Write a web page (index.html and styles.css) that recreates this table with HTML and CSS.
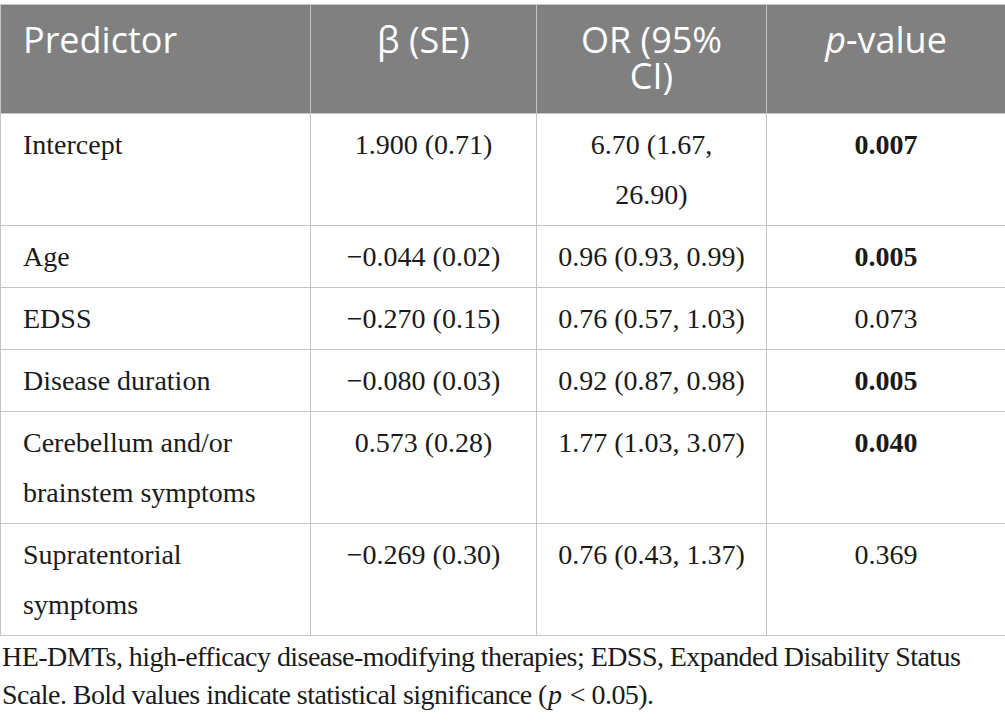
FILE: index.html
```html
<!DOCTYPE html>
<html lang="en">
<head>
<meta charset="utf-8">
<title>Logistic regression predictors</title>
<link rel="stylesheet" href="styles.css">
</head>
<body>
<div class="page">
  <table class="data">
    <colgroup>
      <col class="c1">
      <col class="c2">
      <col class="c3">
      <col class="c4">
    </colgroup>
    <thead>
      <tr>
        <th class="left">Predictor</th>
        <th>β (SE)</th>
        <th>OR (95% CI)</th>
        <th><i>p</i>-value</th>
      </tr>
    </thead>
    <tbody>
      <tr>
        <td class="left">Intercept</td>
        <td>1.900 (0.71)</td>
        <td>6.70 (1.67, 26.90)</td>
        <td><b>0.007</b></td>
      </tr>
      <tr>
        <td class="left">Age</td>
        <td>−0.044 (0.02)</td>
        <td>0.96 (0.93, 0.99)</td>
        <td><b>0.005</b></td>
      </tr>
      <tr>
        <td class="left">EDSS</td>
        <td>−0.270 (0.15)</td>
        <td>0.76 (0.57, 1.03)</td>
        <td>0.073</td>
      </tr>
      <tr>
        <td class="left">Disease duration</td>
        <td>−0.080 (0.03)</td>
        <td>0.92 (0.87, 0.98)</td>
        <td><b>0.005</b></td>
      </tr>
      <tr>
        <td class="left">Cerebellum and/or brainstem symptoms</td>
        <td>0.573 (0.28)</td>
        <td>1.77 (1.03, 3.07)</td>
        <td><b>0.040</b></td>
      </tr>
      <tr>
        <td class="left">Supratentorial symptoms</td>
        <td>−0.269 (0.30)</td>
        <td>0.76 (0.43, 1.37)</td>
        <td>0.369</td>
      </tr>
    </tbody>
  </table>
  <p class="note">HE-DMTs, high-efficacy disease-modifying therapies; EDSS, Expanded Disability Status Scale. Bold values indicate statistical significance (<i class="pv">p</i> &lt; 0.05).</p>
</div>
</body>
</html>
```
FILE: styles.css
```css
html, body {
  margin: 0;
  padding: 0;
  background: #ffffff;
}

.page {
  padding-top: 4px;
  width: 1005px;
}

.data {
  width: 1005px;
  border-collapse: collapse;
  table-layout: fixed;
  font-family: "Liberation Serif", "Times New Roman", serif;
  font-size: 28px;
  color: #1a1a1a;
}

.c1 { width: 310px; }
.c2 { width: 226px; }
.c3 { width: 230px; }
.c4 { width: 239px; }

.data th,
.data td {
  border: 1px solid #c4c4c4;
  text-align: center;
  vertical-align: top;
}

.data th {
  background: #808080;
  color: #ffffff;
  font-family: "Open Sans", "Liberation Sans", sans-serif;
  font-weight: 400;
  font-size: 36px;
  line-height: 36px;
  padding: 17px 20px 19px;
}

.data td {
  line-height: 50px;
  padding: 6px 20px 5px;
}

.data .left {
  text-align: left;
  padding-left: 22px;
}

.data b {
  font-weight: 700;
}

.note {
  margin: 2px 0 0 2px;
  font-family: "Liberation Serif", "Times New Roman", serif;
  font-size: 28px;
  line-height: 38px;
  letter-spacing: -0.55px;
  color: #1a1a1a;
}

.note .pv {
  padding: 0 2px 0 1px;
}
```
